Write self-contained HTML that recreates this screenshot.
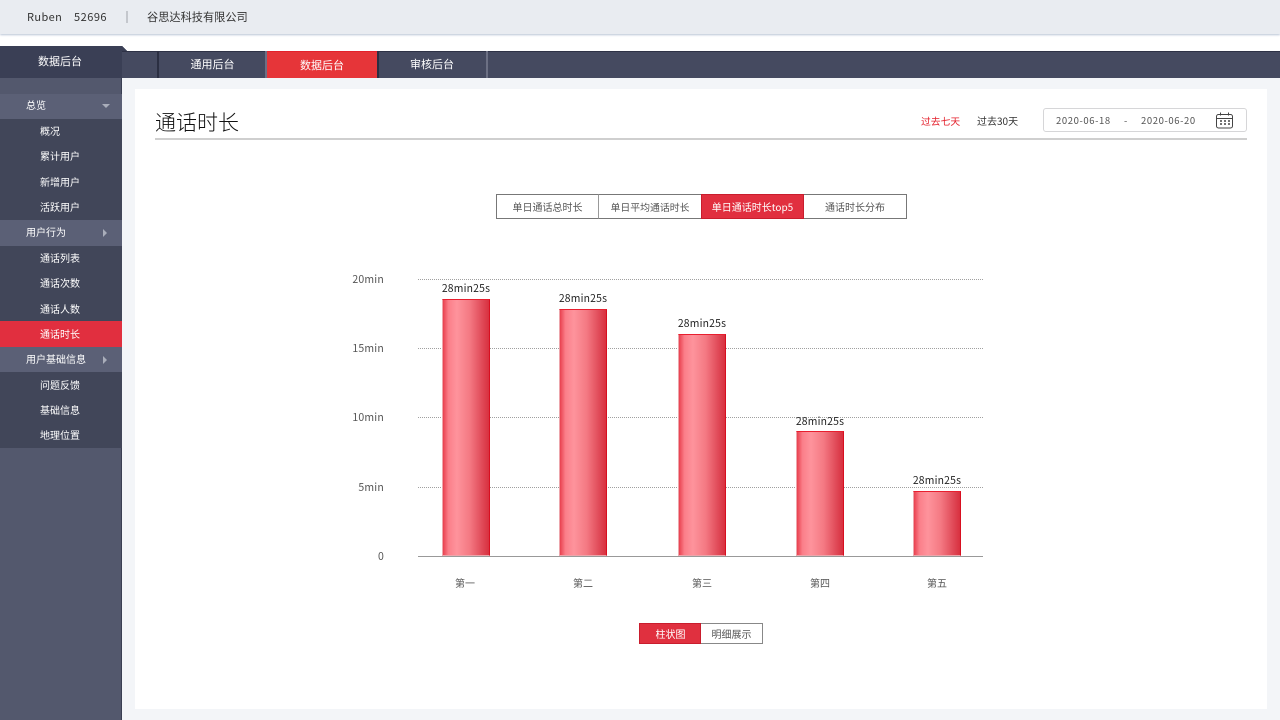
<!DOCTYPE html>
<html lang="zh"><head><meta charset="utf-8"><title>通话时长</title>
<style>
*{box-sizing:border-box;margin:0;padding:0}
html,body{width:1280px;height:720px;overflow:hidden;background:#fff;font-family:"Liberation Sans","Noto Sans CJK SC",sans-serif}
body,.c{font-family:"Noto Sans CJK SC","Liberation Sans",sans-serif}
.a{position:absolute;white-space:nowrap}
.top{left:0;top:0;width:1280px;height:34px;background:#e9ecf1;box-shadow:0 1px 2px #b9c4d6;font-size:11px;color:#333;line-height:35px}
.nav{left:122px;top:51px;width:1158px;height:27px;background:#454a60;border-top:1px solid #2e3246}
.navt{top:51px;height:27px;line-height:27px;text-align:center;color:#fff;font-size:11px}
.sb{left:0;top:78px;width:122px;height:642px;background:#53586d;border-right:1px solid #3a3f53}
.r{left:0;width:122px;height:26px;line-height:23px;color:#fff;font-size:10px;padding-left:40px;background:#414659}
.l{line-height:25px}
.g{background:#5b6076;padding-left:26px}
.on{background:#e12f3f}
.ar{position:absolute;width:0;height:0}
.dn{left:102px;top:10px;border-left:4px solid transparent;border-right:4px solid transparent;border-top:4px solid #a9adba}
.rt{left:103px;top:9px;border-top:4px solid transparent;border-bottom:4px solid transparent;border-left:4px solid #a9adba}
.tab{top:194px;height:25px;line-height:24px;text-align:center;font-size:10px;color:#555;background:#fff;border:1px solid #777}
.lab{width:60px;text-align:center;font-size:10.4px;color:#222;letter-spacing:.2px}
.bar{width:48px;bottom:164px;background:linear-gradient(90deg,#e9414f 0%,#fb7f8a 12%,#fe939c 30%,#f47983 58%,#e04a58 85%,#d8303f 100%);border:1px solid #eda6ac;border-top:1px solid #e81f2f;border-right:1px solid #d80f20}
.dot{left:418px;width:565px;height:0;border-top:1px dotted #a0a0a0}
.yl{width:50px;left:334px;text-align:right;font-size:10.5px;color:#555;letter-spacing:.2px}
.xl{width:60px;text-align:center;font-size:10px;color:#555;top:575px}
</style></head><body>
<div class="a top c"><span class="a" style="left:27px;letter-spacing:.4px">Ruben</span><span class="a" style="left:74px;letter-spacing:.5px">52696</span><span class="a" style="left:126px;top:11px;width:2px;height:12px;background:#c4c7cd"></span><span class="a" style="left:147px;font-size:11.2px">谷思达科技有限公司</span></div>

<div class="a" style="left:122px;top:78px;width:1158px;height:642px;background:#f3f5f8"></div>
<div class="a" style="left:135px;top:89px;width:1132px;height:620px;background:#fff"></div>

<div class="a nav"></div>
<div class="a" style="left:157px;top:51px;width:2px;height:27px;background:#2b2f42"></div>
<div class="a navt c" style="left:159px;width:107px;">通用后台</div>
<div class="a" style="left:265px;top:51px;width:2px;height:27px;background:#6c7084"></div>
<div class="a navt c" style="left:267px;width:110px;background:#e63539;border-top:1px solid #e3212b">数据后台</div>
<div class="a" style="left:377px;top:51px;width:2px;height:27px;background:#2b2f42"></div>
<div class="a navt c" style="left:379px;width:106px;">审核后台</div>
<div class="a" style="left:486px;top:51px;width:2px;height:27px;background:#6c7084"></div>

<div class="a" style="left:0;top:46px;width:121px;height:32px;background:#3a3f55;color:#fff;font-size:11px;line-height:31px;text-align:center;padding-right:1px">数据后台</div>
<div class="a" style="left:121px;top:46px;width:7px;height:5px;background:linear-gradient(225deg,#fff 50%,#3a3f55 50%)"></div>
<div class="a" style="left:121px;top:51px;width:1px;height:27px;background:#3a3f55"></div>

<div class="a sb"></div>
<div class="a r g" style="top:94px;line-height:21px">总览<i class="ar dn"></i></div>
<div class="a r" style="top:119px">概况</div>
<div class="a r" style="top:144px">累计用户</div>
<div class="a r" style="top:170px">新增用户</div>
<div class="a r" style="top:195px">活跃用户</div>
<div class="a r g" style="top:220px">用户行为<i class="ar rt"></i></div>
<div class="a r" style="top:246px">通话列表</div>
<div class="a r" style="top:271px">通话次数</div>
<div class="a r l" style="top:296px">通话人数</div>
<div class="a r on l" style="top:321px">通话时长</div>
<div class="a r g" style="top:347px;height:25px">用户基础信息<i class="ar rt"></i></div>
<div class="a r l" style="top:372px">问题反馈</div>
<div class="a r" style="top:398px">基础信息</div>
<div class="a r" style="top:423px;height:25px">地理位置</div>

<div class="a" style="left:155px;top:106px;font-size:21px;line-height:32px;color:#111;font-weight:300">通话时长</div>
<div class="a" style="left:155px;top:138px;width:1092px;height:2px;background:#cfcfcf"></div>

<div class="a" style="left:921px;top:113px;font-size:9.8px;line-height:16px;color:#e4202c">过去七天</div>
<div class="a" style="left:977px;top:113px;font-size:10px;line-height:16px;color:#333">过去30天</div>
<div class="a" style="left:1043px;top:108px;width:204px;height:24px;border:1px solid #d6d6d8;border-radius:3px;background:#fff"></div>
<div class="a" style="left:1056px;top:113px;font-size:9.5px;line-height:15px;color:#555;letter-spacing:.6px">2020-06-18</div>
<div class="a" style="left:1124px;top:113px;font-size:9.5px;line-height:15px;color:#555">-</div>
<div class="a" style="left:1141px;top:113px;font-size:9.5px;line-height:15px;color:#555;letter-spacing:.6px">2020-06-20</div>
<svg class="a" style="left:1216px;top:112px" width="18" height="17" viewBox="0 0 18 17" fill="none" stroke="#444" stroke-width="1"><rect x=".5" y="2.5" width="16" height="13.5" rx="2"/><path d="M1 6.5h15.5M4.5 .5v3M12.5 .5v3"/><path d="M4 9h2M8 9h2M12 9h2M4 12h2M8 12h2M12 12h2" stroke-width="1.4"/></svg>

<div class="a tab" style="left:496px;width:103px">单日通话总时长</div>
<div class="a tab" style="left:598px;width:104px;border-left:1px solid #999;font-size:9.9px">单日平均通话时长</div>
<div class="a tab" style="left:701px;width:103px;background:#e12f3f;color:#fff;border-color:#c91d2d">单日通话时长top5</div>
<div class="a tab" style="left:804px;width:103px;border-left:none">通话时长分布</div>

<div class="a dot" style="top:279px"></div>
<div class="a dot" style="top:348px"></div>
<div class="a dot" style="top:417px"></div>
<div class="a dot" style="top:487px"></div>
<div class="a" style="left:418px;top:556px;width:565px;height:1px;background:#999"></div>
<div class="a yl" style="top:272px">20min</div>
<div class="a yl" style="top:341px">15min</div>
<div class="a yl" style="top:410px">10min</div>
<div class="a yl" style="top:480px">5min</div>
<div class="a yl" style="top:549px">0</div>

<div class="a bar" style="left:442px;height:257px"></div>
<div class="a bar" style="left:559px;height:247px"></div>
<div class="a bar" style="left:678px;height:222px"></div>
<div class="a bar" style="left:796px;height:125px"></div>
<div class="a bar" style="left:913px;height:65px"></div>
<div class="a lab" style="left:436px;top:280px">28min25s</div>
<div class="a lab" style="left:553px;top:290px">28min25s</div>
<div class="a lab" style="left:672px;top:315px">28min25s</div>
<div class="a lab" style="left:790px;top:413px">28min25s</div>
<div class="a lab" style="left:907px;top:472px">28min25s</div>
<div class="a xl" style="left:435px">第一</div>
<div class="a xl" style="left:553px">第二</div>
<div class="a xl" style="left:672px">第三</div>
<div class="a xl" style="left:790px">第四</div>
<div class="a xl" style="left:907px">第五</div>

<div class="a" style="left:639px;top:623px;width:62px;height:21px;background:#e0303f;border:1px solid #c91d2d;color:#fff;font-size:10px;line-height:20px;text-align:center;padding-left:1px">柱状图</div>
<div class="a" style="left:701px;top:623px;width:62px;height:21px;background:#fff;border:1px solid #888;border-left:none;color:#555;font-size:10px;line-height:20px;text-align:center">明细展示</div>
</body></html>
